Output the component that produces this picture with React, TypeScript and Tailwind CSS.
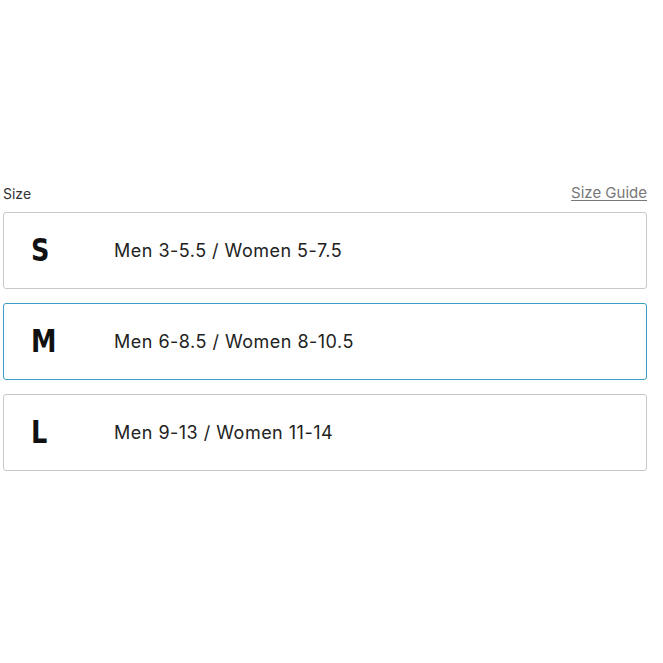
const sizes = [
  { code: 'S', label: 'Men 3-5.5 / Women 5-7.5' },
  { code: 'M', label: 'Men 6-8.5 / Women 8-10.5' },
  { code: 'L', label: 'Men 9-13 / Women 11-14' },
];

export default function App() {
  const selected = 'M';
  return (
    <div className="w-[663px] h-[663px] bg-white pt-[184px] pl-[3px] pr-[16px] font-['Inter','Noto_Sans',sans-serif]">
      <div className="flex items-center justify-between h-[18px] mb-[10px]">
        <span className="text-[14px] text-[#333]">Size</span>
        <a className="text-[15px] text-[#777] underline underline-offset-2">Size Guide</a>
      </div>
      <div className="flex flex-col gap-[14px]">
        {sizes.map((s) => (
          <div
            key={s.code}
            className={`flex items-center h-[77px] rounded-[3px] border bg-white ${
              s.code === selected ? 'border-[#3a9ec2]' : 'border-[#c8c8c8]'
            }`}
          >
            <span className="w-[110px] pl-[27px]">
              <span className="inline-block origin-left scale-x-[0.8] text-[32px] font-bold text-[#111] font-['DejaVu_Sans',sans-serif] leading-none">
                {s.code}
              </span>
            </span>
            <span className="text-[18px] text-[#222] tracking-[0.027em]">{s.label}</span>
          </div>
        ))}
      </div>
    </div>
  );
}
